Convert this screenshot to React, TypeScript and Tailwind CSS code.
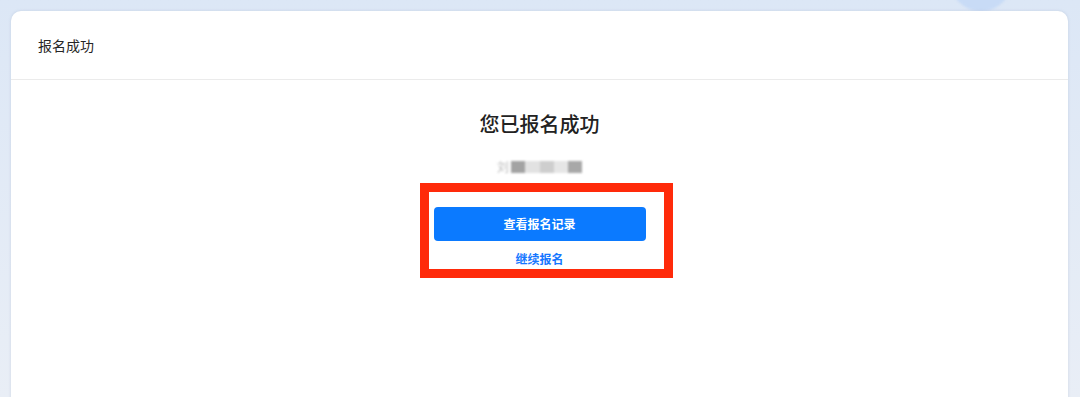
export default function App() {
  return (
    <div
      className="relative h-[397px] w-[1080px] overflow-hidden bg-gradient-to-b from-[#dce7f6] to-[#e9eef6] pl-[11px] pr-[12px] pt-[11px]"
      style={{ fontFamily: '"Noto Sans CJK SC", "Noto Sans", sans-serif' }}
    >
      {/* decorative blob top-right */}
      <div className="absolute left-[950px] top-[-50px] h-[61px] w-[62px] rounded-full bg-[#c8dbf6] blur-[1px]" />
      <div className="relative h-[420px] rounded-t-[10px] bg-white shadow-[0_0_3px_rgba(120,140,170,0.25)]">
        <div className="flex h-[69px] items-center border-b border-[#ebebeb] pl-[27px] text-[14px] text-[#262626]">
          报名成功
        </div>
        <div className="relative flex flex-col items-center">
          <h1 className="mt-[30px] text-[20px] leading-[28px] font-medium text-[#222]">您已报名成功</h1>
          {/* blurred name */}
          <div className="mt-[21px] flex h-[16px] items-center blur-[1px]">
            <span className="mr-[2px] text-[12px] leading-none text-[#bbb]">刘</span>
            <div className="h-[12px] w-[14px] bg-[#a3a3a3]" />
            <div className="h-[12px] w-[15px] bg-[#e2e2e2]" />
            <div className="h-[12px] w-[14px] bg-[#cecece]" />
            <div className="h-[12px] w-[14px] bg-[#e6e6e6]" />
            <div className="h-[12px] w-[14px] bg-[#a8a8a8]" />
          </div>
          <button className="mt-[32px] h-[34px] w-[212px] rounded-[4px] bg-[#0b7aff] text-[12px] font-bold text-white">
            查看报名记录
          </button>
          <a className="mt-[10px] text-[12px] leading-[16px] font-bold text-[#1677ff]">继续报名</a>
          {/* annotation box */}
          <div className="pointer-events-none absolute left-[409px] top-[103px] h-[95px] w-[253px] border-[9px] border-[#ff2a0a]" />
        </div>
      </div>
    </div>
  );
}
